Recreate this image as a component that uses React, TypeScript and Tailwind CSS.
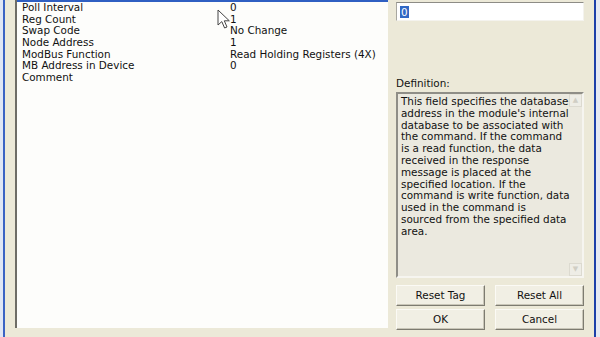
import React from "react";

const rows: [string, string][] = [
  ["Poll Interval", "0"],
  ["Reg Count", "1"],
  ["Swap Code", "No Change"],
  ["Node Address", "1"],
  ["ModBus Function", "Read Holding Registers (4X)"],
  ["MB Address in Device", "0"],
  ["Comment", ""],
];

const definition = [
  "This field specifies the database",
  "address in the module's internal",
  "database to be associated with",
  "the command. If the command",
  "is a read function, the data",
  "received in the response",
  "message is placed at the",
  "specified location. If the",
  "command is write function, data",
  "used in the command is",
  "sourced from the specified data",
  "area.",
];

const XpButton = ({ label }: { label: string }) => (
  <button className="h-[21px] w-[89px] bg-[#f1efe4] border border-t-[#fbfaf5] border-l-[#fbfaf5] border-b-[#7d7b70] border-r-[#7d7b70] shadow-[inset_-1px_-1px_0_#c9c6b8] text-[10.4px] text-[#111]">
    {label}
  </button>
);

const Cursor = () => (
  <svg className="absolute left-[217px] top-[9px]" width="15" height="21" viewBox="0 0 15 21">
    <path d="M1 1 L1 16 L4.8 12.6 L7.6 19 L10 18 L7.3 11.8 L12.3 11.8 Z" fill="#fff" stroke="#444" strokeWidth="1" strokeLinejoin="round" />
  </svg>
);

export default function App() {
  return (
    <div className="relative flex w-[600px] h-[337px] overflow-hidden bg-[#ece9d8] text-[#111] text-[10.4px] font-['DejaVu_Sans',sans-serif]">
      {/* window edge on the left */}
      <div className="flex w-[5px] h-full bg-[#c9d4ec]">
        <div className="w-[3px] h-full bg-[#dfe6f5]" />
        <div className="w-[2px] h-full bg-[#3a63c4]" />
      </div>
      <div className="w-[10px]" />

      {/* property list */}
      <div className="flex flex-col w-[373px] h-[328px] bg-[#fdfdfb] border-l-2 border-l-[#6e6d66]">
        <div className="h-[2px] bg-[#2f5fc2]" />
        <div className="pl-[5px]">
          {rows.map(([label, value]) => (
            <div key={label} className="grid grid-cols-[208px_1fr] leading-[11.7px] h-[11.7px]">
              <span>{label}</span>
              <span>{value}</span>
            </div>
          ))}
        </div>
      </div>

      {/* right side */}
      <div className="flex flex-col w-[206px] h-full pl-[8px] pr-[10px]">
        <div className="mt-[2px] h-[19px] bg-white border border-t-[#8d8c86] border-l-[#a8a7a0] border-b-[#f4f3ee] border-r-[#f4f3ee] flex items-center pl-[3px]">
          <span className="bg-[#3168c5] text-white leading-[12px] px-[1px]">0</span>
        </div>

        <div className="mt-[56px] leading-[12px]">Definition:</div>

        <div className="mt-[3px] relative h-[186px] bg-[#ebe9df] border-2 border-t-[#8f8e87] border-l-[#8f8e87] border-b-[#f6f5f0] border-r-[#f6f5f0] pl-[3px] pt-[2px]">
          {definition.map((line) => (
            <div key={line} className="leading-[11.8px] whitespace-nowrap">
              {line}
            </div>
          ))}
          <div className="absolute right-0 top-0 bottom-0 w-[13px] flex flex-col justify-between">
            <div className="h-[13px] bg-[#eeede6] border border-[#dcdad0] flex items-center justify-center text-[7px] text-[#d0cec4]">▲</div>
            <div className="h-[13px] bg-[#eeede6] border border-[#dcdad0] flex items-center justify-center text-[7px] text-[#d0cec4]">▼</div>
          </div>
        </div>

        <div className="mt-[7px] flex justify-between">
          <XpButton label="Reset Tag" />
          <XpButton label="Reset All" />
        </div>
        <div className="mt-[3px] flex justify-between">
          <XpButton label="OK" />
          <XpButton label="Cancel" />
        </div>
      </div>

      {/* window edge on the right */}
      <div className="w-[2px] h-full bg-[#1c3fa8]" />
      <div className="flex-1 h-full bg-[#e4e8f2]" />

      <Cursor />
    </div>
  );
}
